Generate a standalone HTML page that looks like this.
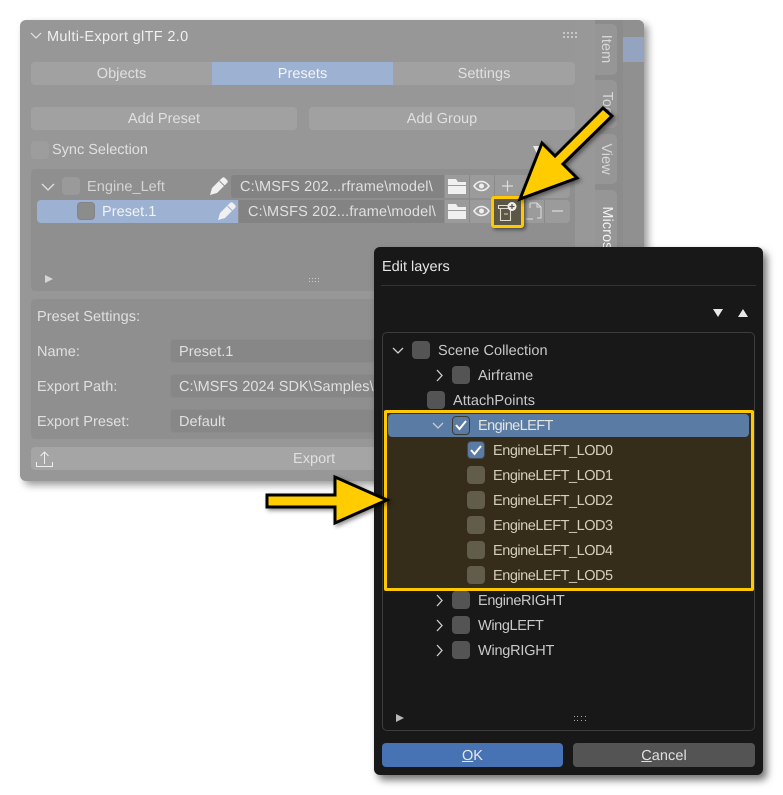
<!DOCTYPE html>
<html><head><meta charset="utf-8"><style>
html,body{margin:0;padding:0;background:#fff}
#r{position:relative;width:783px;height:795px;overflow:hidden;background:#fff;font-family:"Liberation Sans",sans-serif;font-size:14.5px;filter:blur(.25px);text-rendering:geometricPrecision}
#r div{position:absolute;box-sizing:border-box}
.t{white-space:nowrap;color:#e0e0e0;line-height:18px;height:18px;letter-spacing:.05px;margin-top:1px}
.c{text-align:center}
.b{background:#a1a1a1;border-radius:4px}
.f{background:#838383;border-radius:4px}
.k{width:18px;height:18px;border-radius:4px;background:#9a9a9a}
.n{background:#8f8f8f;border-radius:4px}
.d{color:#c9c9c9}
.h{color:#d4cfbb;letter-spacing:-.46px}
.x{width:18px;height:18px;border-radius:4px;background:#545454}
.y{width:18px;height:18px;border-radius:4px;background:#625c4a}
svg{position:absolute;overflow:visible}
</style></head><body><div id="r">

<div style="left:20px;top:20px;width:624px;height:461px;background:#979797;border-radius:6px;box-shadow:4px 4px 8px rgba(0,0,0,.4)"></div>
<div style="left:595px;top:20px;width:29px;height:300px;background:#8c8c8c"></div>
<div style="left:623px;top:20px;width:21px;height:300px;background:#909090;border-radius:0 6px 0 0"></div>
<div style="left:623px;top:37px;width:21px;height:25px;background:#94a3bf"></div>
<div style="left:575px;top:20px;width:20px;height:300px;background:#989898"></div>

<div style="left:595px;top:24px;width:22px;height:51px;background:#969696;border-radius:0 5px 5px 0"></div>
<div style="left:595px;top:80px;width:22px;height:48px;background:#969696;border-radius:0 5px 5px 0"></div>
<div style="left:595px;top:134px;width:22px;height:50px;background:#969696;border-radius:0 5px 5px 0"></div>
<div style="left:595px;top:190px;width:22px;height:70px;background:#969696;border-radius:0 5px 5px 0"></div>
<div class="t" style="left:606px;top:48px;transform:translate(-50%,-50%) rotate(90deg);color:#d8d8d8">Item</div>
<div class="t" style="left:607px;top:104px;transform:translate(-50%,-50%) rotate(90deg);color:#d8d8d8">Tool</div>
<div class="t" style="left:606px;top:158px;transform:translate(-50%,-50%) rotate(90deg);color:#d8d8d8">View</div>
<div class="t" style="left:607px;top:235px;transform:translate(-50%,-50%) rotate(90deg);color:#f2f2f2">Microsoft</div>

<svg style="left:0;top:0" width="783" height="795"><path d="M31 33l5 5 5-5" fill="none" stroke="#e4e4e4" stroke-width="1.2"/></svg>
<div class="t" style="left:47px;top:27px;color:#f0f0f0;letter-spacing:.33px">Multi-Export glTF 2.0</div>
<svg style="left:0;top:0" width="783" height="795"><g fill="#c6c6c6"><rect x="563" y="32" width="2" height="2"/><rect x="567" y="32" width="2" height="2"/><rect x="571" y="32" width="2" height="2"/><rect x="575" y="32" width="2" height="2"/><rect x="563" y="36" width="2" height="2"/><rect x="567" y="36" width="2" height="2"/><rect x="571" y="36" width="2" height="2"/><rect x="575" y="36" width="2" height="2"/></g></svg>

<div class="b" style="left:31px;top:62px;width:181px;height:23px;border-radius:4px 0 0 4px"></div>
<div style="left:212px;top:62px;width:181px;height:23px;background:#9db1d3"></div>
<div class="b" style="left:393px;top:62px;width:182px;height:23px;border-radius:0 4px 4px 0"></div>
<div class="t c" style="left:31px;top:64px;width:181px">Objects</div>
<div class="t c" style="left:212px;top:64px;width:181px;color:#f4f4f4">Presets</div>
<div class="t c" style="left:393px;top:64px;width:182px">Settings</div>

<div class="b" style="left:31px;top:107px;width:266px;height:23px"></div>
<div class="b" style="left:309px;top:107px;width:266px;height:23px"></div>
<div class="t c" style="left:31px;top:109px;width:266px">Add Preset</div>
<div class="t c" style="left:309px;top:109px;width:266px">Add Group</div>

<div class="k" style="left:31px;top:141px;background:#9d9d9d"></div>
<div class="t" style="left:52px;top:140px;letter-spacing:0">Sync Selection</div>

<div class="n" style="left:31px;top:169px;width:544px;height:122px"></div>

<div class="f" style="left:231px;top:175px;width:213px;height:23px;border-radius:3px 0 0 3px"></div>
<div style="left:37px;top:200px;width:201px;height:23px;background:#9db1d3;border-radius:4px 0 0 4px"></div>
<div class="f" style="left:239px;top:200px;width:205px;height:23px;border-radius:0"></div>
<div class="k" style="left:62px;top:177px"></div>
<div class="k" style="left:77px;top:202px;background:#8c8c8c;border:1px solid #848484"></div>
<div class="t" style="left:87px;top:177px;color:#d4d4d4">Engine_Left</div>
<div class="t" style="left:102px;top:202px;color:#f2f2f2">Preset.1</div>
<div class="t" style="left:240px;top:177px;letter-spacing:.16px">C:\MSFS 202...rframe\model\</div>
<div class="t" style="left:248px;top:202px;letter-spacing:.16px">C:\MSFS 202...frame\model\</div>

<div style="left:445px;top:175px;width:125px;height:23px;background:#9b9b9b;border-radius:0 4px 4px 0"></div>
<div style="left:445px;top:200px;width:125px;height:23px;background:#9b9b9b;border-radius:0 4px 4px 0"></div>
<div style="left:469px;top:175px;width:1px;height:48px;background:#8a8a8a"></div>
<div style="left:494px;top:175px;width:1px;height:23px;background:#8a8a8a"></div>
<div style="left:544px;top:200px;width:1px;height:23px;background:#8a8a8a"></div>

<svg style="left:0;top:0" width="783" height="795">
<g fill="#f0f0f0">
<path d="M210 195l2-7 10-10c1-1 2-1 3 0l2 2c1 1 1 2 0 3l-10 10z"/>
<path d="M218 220l2-7 10-10c1-1 2-1 3 0l2 2c1 1 1 2 0 3l-10 10z"/>
<path d="M448 179h8l2 3h8v3h-18zM448 186h18v8h-18z"/>
<path d="M448 204h8l2 3h8v3h-18zM448 211h18v8h-18z"/>
</g>
<path d="M219.500 181l5 5" stroke="#8f8f8f" stroke-width="1" fill="none"/>
<path d="M227.500 206l5 5" stroke="#9db1d3" stroke-width="1" fill="none"/>
<g fill="none" stroke="#eeeeee" stroke-width="1.6">
<path d="M474 186c4-6 11-6 15 0-4 6-11 6-15 0z"/>
<path d="M474 211c4-6 11-6 15 0-4 6-11 6-15 0z"/>
<path d="M502 186h11M507.500 180.500v11" stroke="#dddddd" stroke-width="1.2"/>
<path d="M552 211h11" stroke="#dddddd" stroke-width="1.2"/>
<path d="M530 203h7l4 4v11h-4M541 207h-4v-4M530 203v5M526 219h7" stroke="#dddddd" stroke-width="1"/>
</g>
<g fill="#eeeeee"><circle cx="481.500" cy="186" r="2.500"/><circle cx="481.500" cy="211" r="2.500"/></g>
</svg>

<div style="left:491px;top:196px;width:33px;height:32px;background:#5b5645;border:3px solid #ffc800;border-radius:3px;box-shadow:2px 2px 3px rgba(0,0,0,.45)"></div>
<svg style="left:0;top:0" width="783" height="795"><g fill="none" stroke="#dedbcd" stroke-width="1.1">
<path d="M498.500 205.500h11v3h-11zM500.500 208.500v12h10v-12M504 214h4"/></g>
<circle cx="512" cy="206.500" r="4.500" fill="#f0f0f0"/><path d="M509.500 206.500h5M512 204v5" stroke="#55503f" stroke-width="1.2"/></svg>

<svg style="left:0;top:0" width="783" height="795">
<path d="M533 146h7l-3.500 7z" fill="#e8e8e8"/>
<path d="M45 275l8 4-8 4z" fill="#d6d6d6"/>
<g fill="#cfcfcf"><rect x="309" y="278" width="1" height="1"/><rect x="312" y="278" width="1" height="1"/><rect x="315" y="278" width="1" height="1"/><rect x="318" y="278" width="1" height="1"/><rect x="309" y="281" width="1" height="1"/><rect x="312" y="281" width="1" height="1"/><rect x="315" y="281" width="1" height="1"/><rect x="318" y="281" width="1" height="1"/></g>
</svg>

<div class="n" style="left:31px;top:299px;width:544px;height:140px"></div>
<div class="t" style="left:37px;top:307px">Preset Settings:</div>
<div class="t" style="left:37px;top:342px">Name:</div>
<div class="t" style="left:37px;top:377px">Export Path:</div>
<div class="t" style="left:37px;top:412px">Export Preset:</div>
<div class="f" style="left:170px;top:339px;width:230px;height:24px;background:#878787;border:1px solid #8c8c8c"></div>
<div class="f" style="left:170px;top:374px;width:230px;height:24px;background:#878787;border:1px solid #8c8c8c"></div>
<div class="f" style="left:170px;top:409px;width:230px;height:24px;background:#878787;border:1px solid #8c8c8c"></div>
<div class="t" style="left:179px;top:342px">Preset.1</div>
<div class="t" style="left:179px;top:377px;width:195px;overflow:hidden">C:\MSFS 2024 SDK\Samples\</div>
<div class="t" style="left:179px;top:412px">Default</div>
<div class="b" style="left:31px;top:447px;width:544px;height:23px;background:#a5a5a5"></div>
<div class="t" style="left:293px;top:449px">Export</div>
<svg style="left:0;top:0" width="783" height="795"><path d="M36.500 462v4.500h16v-4.500M44.500 464v-12M40.500 456l4-4 4 4" fill="none" stroke="#eeeeee" stroke-width="1"/></svg>

<div style="left:374px;top:247px;width:389px;height:528px;background:#181818;border-radius:6px;box-shadow:4px 5px 8px rgba(0,0,0,.55)"></div>
<div class="t" style="left:382px;top:257px;color:#e6e6e6;letter-spacing:0">Edit layers</div>
<div style="left:381px;top:285px;width:375px;height:1px;background:#333"></div>
<svg style="left:0;top:0" width="783" height="795"><path d="M713 309h10l-5 8zM738 317h10l-5-8z" fill="#e8e8e8"/></svg>
<div style="left:382px;top:332px;width:373px;height:399px;border:1px solid #3d3d3d;border-radius:5px"></div>

<div class="x" style="left:412px;top:341px"></div>
<div class="t d" style="left:438px;top:341px">Scene Collection</div>
<div class="x" style="left:452px;top:366px"></div>
<div class="t d" style="left:478px;top:366px">Airframe</div>
<div class="x" style="left:427px;top:391px"></div>
<div class="t d" style="left:453px;top:391px">AttachPoints</div>

<div style="left:384px;top:410px;width:370px;height:181px;background:#352c1a;border:3px solid #ffc800;border-radius:2px"></div>
<div style="left:388px;top:414px;width:361px;height:23px;background:#5a7ba4;border-radius:4px"></div>
<div style="left:452px;top:416px;width:18px;height:19px;border:1px solid #3f3a30;border-radius:4px"></div>
<div class="t" style="left:478px;top:416px;color:#e6e6e0;letter-spacing:-.58px">EngineLEFT</div>
<div class="x" style="left:467px;top:441px;background:#5a7ba4;border:1px solid #454a4d"></div>
<div class="t h" style="left:493px;top:441px">EngineLEFT_LOD0</div>
<div class="y" style="left:467px;top:466px"></div>
<div class="t h" style="left:493px;top:466px">EngineLEFT_LOD1</div>
<div class="y" style="left:467px;top:491px"></div>
<div class="t h" style="left:493px;top:491px">EngineLEFT_LOD2</div>
<div class="y" style="left:467px;top:516px"></div>
<div class="t h" style="left:493px;top:516px">EngineLEFT_LOD3</div>
<div class="y" style="left:467px;top:541px"></div>
<div class="t h" style="left:493px;top:541px">EngineLEFT_LOD4</div>
<div class="y" style="left:467px;top:566px"></div>
<div class="t h" style="left:493px;top:566px">EngineLEFT_LOD5</div>

<div class="x" style="left:452px;top:591px"></div>
<div class="t d" style="left:478px;top:591px;letter-spacing:-.35px">EngineRIGHT</div>
<div class="x" style="left:452px;top:616px"></div>
<div class="t d" style="left:478px;top:616px;letter-spacing:-.37px">WingLEFT</div>
<div class="x" style="left:452px;top:641px"></div>
<div class="t d" style="left:478px;top:641px;letter-spacing:-.22px">WingRIGHT</div>

<svg style="left:0;top:0" width="783" height="795">
<g fill="none" stroke="#cfcfcf" stroke-width="1.3">
<path d="M393 348l5 5 5-5M437 370l5 5.500-5 5.500M437 595l5 5.500-5 5.500M437 620l5 5.500-5 5.500M437 645l5 5.500-5 5.500"/>
<path d="M433 423l5 5 5-5" stroke="#c6cdd6"/>
<path d="M42 184l6 6 6-6" stroke="#e0e0e0"/>
</g>
<g fill="none" stroke="#ffffff" stroke-width="2"><path d="M456 425l3.500 4 6.500-8M471 450l3.500 4 6.500-8"/></g>
<path d="M396 714l8 4-8 4z" fill="#b8b8b8"/>
<g fill="#a8a8a8"><rect x="574" y="716" width="1" height="1"/><rect x="577" y="716" width="1" height="1"/><rect x="581" y="716" width="1" height="1"/><rect x="585" y="716" width="1" height="1"/><rect x="574" y="720" width="1" height="1"/><rect x="577" y="720" width="1" height="1"/><rect x="581" y="720" width="1" height="1"/><rect x="585" y="720" width="1" height="1"/></g>
</svg>

<div style="left:382px;top:743px;width:181px;height:24px;background:#4772b3;border-radius:4px"></div>
<div style="left:573px;top:743px;width:182px;height:24px;background:#545454;border-radius:4px"></div>
<div class="t c" style="left:382px;top:746px;width:181px;color:#e8e8e8"><span style="text-decoration:underline">O</span>K</div>
<div class="t c" style="left:573px;top:746px;width:182px;color:#e0e0e0"><span style="text-decoration:underline">C</span>ancel</div>

<svg style="left:0;top:0" width="783" height="795">
<g style="filter:drop-shadow(2px 2px 2px rgba(0,0,0,.45))">
<path d="M603 108L612 116L563 164L577 178L520 199L542 143L555 156Z" fill="#ffcc00" stroke="#000" stroke-width="3" stroke-linejoin="miter"/>
<path d="M267 495H335V477L387 500L335 523V507H267Z" fill="#ffcc00" stroke="#000" stroke-width="3" stroke-linejoin="miter"/>
</g>
</svg>
</div></body></html>
